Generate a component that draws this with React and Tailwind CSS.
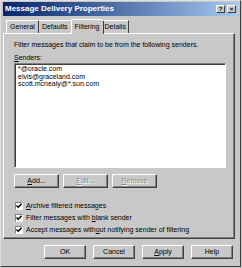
import React from "react";

const F = { fontFamily: "'Liberation Sans', Arial, sans-serif" };

function Btn({ children, className = "", disabled = false }) {
  return (
    <div
      className={`flex items-center justify-center h-[14px] bg-[#c8c8c8] border border-t-white border-l-white border-r-[#404040] border-b-[#404040] shadow-[inset_-1px_-1px_0_#808080] text-[7px] ${disabled ? "text-[#8a8a8a] [text-shadow:1px_1px_0_#ffffff]" : "text-black"} ${className}`}
    >
      {children}
    </div>
  );
}

function Check({ label }) {
  return (
    <div className="flex items-center gap-[3px] h-[12px]">
      <div className="w-[8px] h-[8px] bg-white border border-t-[#808080] border-l-[#808080] border-r-white border-b-white flex items-center justify-center">
        <svg width="6" height="6" viewBox="0 0 7 7">
          <path d="M0.5 3 L2.5 5 L6.5 1" stroke="black" strokeWidth="1.6" fill="none" />
        </svg>
      </div>
      <span className="text-[7px] text-black">{label}</span>
    </div>
  );
}

export default function App() {
  return (
    <div className="w-[242px] h-[268px] bg-[#c8c8c8] overflow-hidden" style={F}>
      <div className="w-[241px] h-[267px] border border-t-[#e0e0e0] border-l-[#e0e0e0] border-r-[#404040] border-b-[#404040] px-[2px] pt-[1px] pb-[2px] flex flex-col">
        {/* title bar */}
        <div className="h-[14px] bg-gradient-to-r from-[#0a246a] to-[#a6caf0] flex items-center justify-between pl-[2px] pr-[2px]">
          <span className="text-white font-bold text-[8px] leading-none">Message Delivery Properties</span>
          <div className="flex gap-[2px]">
            <div className="w-[9px] h-[8px] bg-[#c8c8c8] border border-t-white border-l-white border-r-[#404040] border-b-[#404040] flex items-center justify-center text-[6px] font-bold leading-none text-black">?</div>
            <div className="w-[9px] h-[8px] bg-[#c8c8c8] border border-t-white border-l-white border-r-[#404040] border-b-[#404040] flex items-center justify-center text-[6px] font-bold leading-none text-black">×</div>
          </div>
        </div>

        {/* tabs */}
        <div className="flex items-end h-[16px] pl-[3px] mt-[1px] relative z-10">
          <div className="h-[13px] px-[3px] flex items-center border border-b-0 border-t-white border-l-white border-r-[#404040] rounded-t-[1px] text-[7px]">General</div>
          <div className="h-[13px] px-[3px] flex items-center border border-b-0 border-t-white border-l-0 border-r-[#404040] text-[7px]">Defaults</div>
          <div className="h-[15px] px-[3px] -mx-[1px] mb-[-1px] bg-[#c8c8c8] flex items-center border border-b-0 border-t-white border-l-white border-r-[#404040] text-[7px]">Filtering</div>
          <div className="h-[13px] px-[2px] flex items-center border border-b-0 border-t-white border-l-0 border-r-[#404040] text-[7px]">Details</div>
        </div>

        {/* panel */}
        <div className="h-[206px] w-[232px] border border-t-white border-l-white border-r-[#404040] border-b-[#404040] shadow-[inset_-1px_-1px_0_#808080] px-[10px] pt-[7px] flex flex-col">
          <div className="text-[7px] leading-none text-black">Filter messages that claim to be from the following senders.</div>
          <div className="text-[7px] leading-none text-black mt-[6px]"><span className="underline">S</span>enders:</div>
          <div className="mt-[2px] h-[105px] w-[212px] bg-white border border-t-[#808080] border-l-[#808080] border-r-white border-b-white shadow-[inset_1px_1px_0_#404040] px-[3px] pt-[1px] text-[7px] leading-[7.5px] text-black">
            <div>*@oracle.com</div>
            <div>elvis@graceland.com</div>
            <div>scott.mcnealy@*.sun.com</div>
          </div>
          <div className="flex gap-[4px] mt-[6px]">
            <Btn className="w-[45px]"><span className="underline">A</span>dd...</Btn>
            <Btn className="w-[45px]" disabled><span className="underline">E</span>dit...</Btn>
            <Btn className="w-[45px]" disabled><span className="underline">R</span>emove</Btn>
          </div>
          <div className="flex flex-col mt-[12px] ml-[1px]">
            <Check label={<><span className="underline">A</span>rchive filtered messages</>} />
            <Check label={<>Filter messages with <span className="underline">b</span>lank sender</>} />
            <Check label={<>Accept messages with<span className="underline">o</span>ut notifying sender of filtering</>} />
          </div>
        </div>

        {/* bottom buttons */}
        <div className="flex justify-end gap-[7px] mt-[6px] pr-[5px]">
          <Btn className="w-[42px]">OK</Btn>
          <Btn className="w-[42px]">Cancel</Btn>
          <Btn className="w-[42px]"><span className="underline">A</span>pply</Btn>
          <Btn className="w-[42px]">Help</Btn>
        </div>
      </div>
    </div>
  );
}
